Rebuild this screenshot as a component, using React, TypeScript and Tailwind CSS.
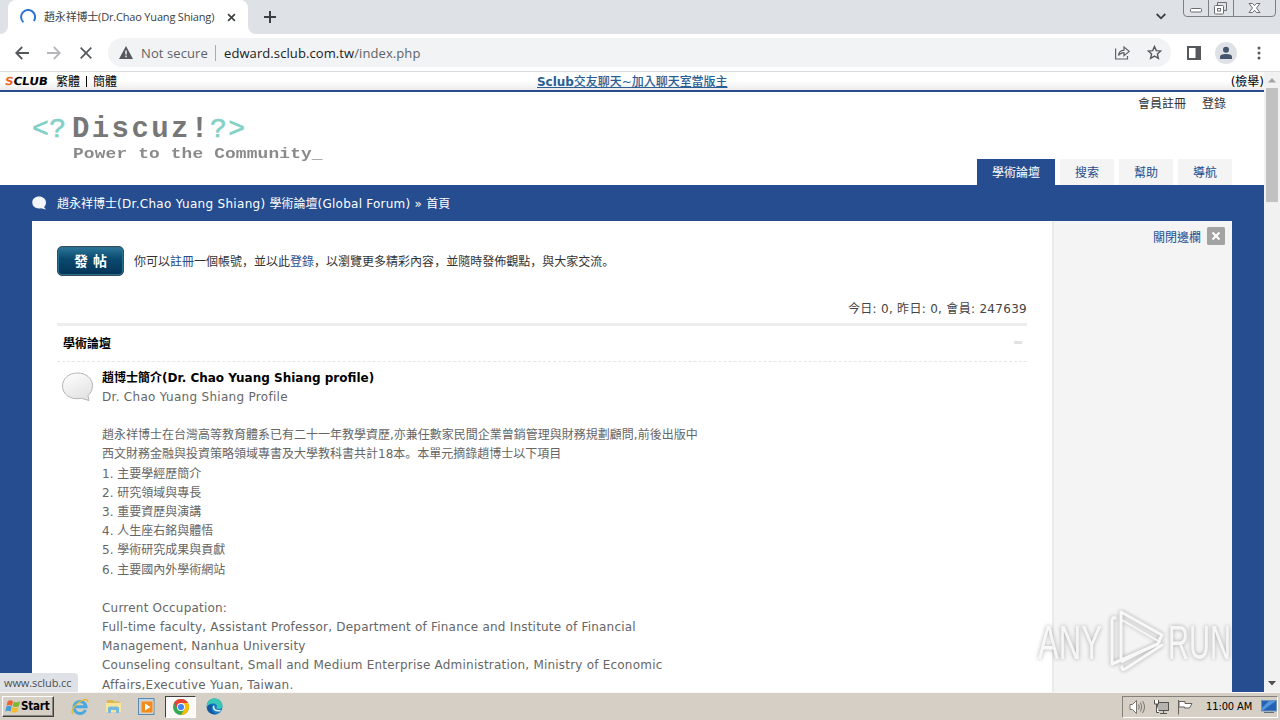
import React from "react";

type Line = { text: React.ReactNode; latin?: boolean };

function Punct({ children }: { children: string }) {
  return <span className="font-['Noto_Sans_CJK_SC'] leading-none">{children}</span>;
}

const intro: Line[] = [
  { text: "" },
  { text: "趙永祥博士在台灣高等教育體系已有二十一年教學資歷,亦兼任數家民間企業曾銷管理與財務規劃顧問,前後出版中" },
  { text: <>西文財務金融與投資策略領域專書及大學教科書共計18本<Punct>。</Punct>本單元摘錄趙博士以下項目</> },
  { text: "1. 主要學經歷簡介" },
  { text: "2. 研究領域與專長" },
  { text: "3. 重要資歷與演講" },
  { text: "4. 人生座右銘與體悟" },
  { text: "5. 學術研究成果與貢獻" },
  { text: "6. 主要國內外學術網站" },
  { text: "" },
  { text: "Current Occupation:", latin: true },
  { text: "Full-time faculty, Assistant Professor, Department of Finance and Institute of Financial", latin: true },
  { text: "Management, Nanhua University", latin: true },
  { text: "Counseling consultant, Small and Medium Enterprise Administration, Ministry of Economic", latin: true },
  { text: "Affairs,Executive Yuan, Taiwan.", latin: true },
];

function TabStrip() {
  return (
    <div className="flex h-[34px] shrink-0 bg-[#dee1e6]">
      <div className="flex w-2 items-end bg-white">
        <div className="h-full w-full rounded-br-lg bg-[#dee1e6]" />
      </div>
      <div className="flex w-[240px] items-center rounded-t-lg bg-white pl-3">
        <svg className="size-4 shrink-0" viewBox="0 0 16 16" fill="none" stroke="#2f73d0" strokeWidth="2">
          <path d="M3.4 13.2A7 7 0 1 1 13.8 12" />
        </svg>
        <div className="ml-2 w-[172px] whitespace-nowrap text-[11px] leading-4 tracking-[-0.18px] text-[#3c4043]">
          趙永祥博士(Dr.Chao Yuang Shiang)
        </div>
        <svg className="ml-[11px] size-[9px] shrink-0" viewBox="0 0 10 10" stroke="#3c4043" strokeWidth="1.8">
          <path d="M1.2 1.2 8.8 8.8M8.8 1.2 1.2 8.8" />
        </svg>
      </div>
      <div className="flex w-2 bg-white">
        <div className="h-full w-full rounded-bl-lg bg-[#dee1e6]" />
      </div>
      <div className="flex items-center pl-2">
        <svg className="size-3" viewBox="0 0 12 12" stroke="#3c4043" strokeWidth="2">
          <path d="M6 0V12M0 6H12" />
        </svg>
      </div>
      <div className="ml-auto flex">
        <svg className="mr-[17px] mt-[13px] h-[7px] w-[10px]" viewBox="0 0 10 7" fill="none" stroke="#3c4043" strokeWidth="1.8">
          <path d="M.7 1 5 5.3 9.3 1" />
        </svg>
        <svg className="mr-[4px] h-[17px] w-[93px]" viewBox="0 0 93 17" fill="none" stroke="#7c8088">
          <path d="M.5 0V13Q.5 16.5 4 16.5H89Q92.5 16.5 92.5 13V0M25.5 0V16M50.5 0V16" />
          <rect x="7.5" y="8.5" width="11" height="3.5" rx="1" fill="#fff" stroke="#6a6d75" />
          <path d="M34.5 5V2.5H43.5V10.5H41" stroke="#6a6d75" />
          <rect x="31.5" y="5.5" width="9" height="8.5" rx="1" fill="#fff" stroke="#6a6d75" />
          <rect x="34.5" y="8.5" width="3" height="2.5" stroke="#6a6d75" />
          <path d="M66 3.5H69.5L71.5 5.7 73.5 3.5H77L73.5 8 77 12.5H73.5L71.5 10.2 69.5 12.5H66L69.5 8Z" fill="#fff" stroke="#6a6d75" />
        </svg>
      </div>
    </div>
  );
}

function Toolbar() {
  return (
    <div className="flex h-[38px] shrink-0 items-center border-b border-[#d9dbde] bg-white pl-[15px] font-['Open_Sans']">
      <svg className="size-[14px]" viewBox="0 0 14 14" fill="none" stroke="#54585d" strokeWidth="1.8">
        <path d="M14 7H1.5M7.2 1 1.2 7 7.2 13" />
      </svg>
      <svg className="ml-[18px] size-[14px]" viewBox="0 0 14 14" fill="none" stroke="#b5b7ba" strokeWidth="1.8">
        <path d="M0 7H12.5M6.8 1 12.8 7 6.8 13" />
      </svg>
      <svg className="ml-[19px] size-3" viewBox="0 0 12 12" stroke="#54585d" strokeWidth="1.7">
        <path d="M.7.7 11.3 11.3M11.3.7.7 11.3" />
      </svg>
      <div className="ml-4 flex h-[29px] w-[1063px] items-center rounded-full bg-[#f1f3f4] pl-[11px] text-[13px] leading-5">
        <svg className="h-[13px] w-[14px]" viewBox="0 0 14 13">
          <path d="M7 0 14 13H0Z" fill="#55595e" />
          <path d="M7 4.5V8.5M7 9.5V11.2" stroke="#f1f3f4" strokeWidth="1.5" />
        </svg>
        <span className="ml-2 w-[68px] whitespace-nowrap tracking-[0.1px] text-[#5f6368]">Not secure</span>
        <div className="ml-[6px] h-4 w-px bg-[#a9acb0]" />
        <span className="ml-2 whitespace-nowrap tracking-[0.09px] text-[#202124]">
          edward.sclub.com.tw<span className="text-[#5f6368]">/index.php</span>
        </span>
        <svg className="ml-auto mr-[17px] h-[15px] w-[15px]" viewBox="0 0 15 15" fill="none" stroke="#5f6368" strokeWidth="1.2">
          <path d="M.6 3.5V14H12.5V11M3.5 10.5Q4 5.5 9 5.2V2L14.2 6.4 9 10.7V7.6Q5.5 7.6 3.5 10.5Z" />
        </svg>
        <svg className="mr-[9px] h-[15px] w-[15px]" viewBox="0 0 15 15" fill="none" stroke="#55595e" strokeWidth="1.4">
          <path d="M7.5 1.5 9.3 5.6 13.8 6 10.4 9 11.4 13.4 7.5 11.1 3.6 13.4 4.6 9 1.2 6 5.7 5.6Z" />
        </svg>
      </div>
      <svg className="ml-[16px] h-[14px] w-[14px]" viewBox="0 0 14 14">
        <path d="M1 1H13V13H1Z" fill="none" stroke="#55595e" strokeWidth="2" />
        <path d="M8.5 0H14V14H8.5Z" fill="#55595e" />
      </svg>
      <svg className="ml-[14px] size-[22px]" viewBox="0 0 22 22">
        <circle cx="11" cy="11" r="11" fill="#dee1e6" />
        <circle cx="11" cy="7.7" r="3" fill="#46546e" />
        <path d="M5 17V14.8Q5 12 11 12T17 14.8V17Z" fill="#46546e" />
      </svg>
      <svg className="ml-[20px] h-[14px] w-[4px]" viewBox="0 0 4 14" fill="#55595e">
        <circle cx="2" cy="2" r="1.5" />
        <circle cx="2" cy="7" r="1.5" />
        <circle cx="2" cy="12" r="1.5" />
      </svg>
    </div>
  );
}

function TopBar() {
  return (
    <div className="flex h-5 shrink-0 items-center border-b-2 border-[#2b4c8e] bg-gradient-to-b from-white from-50% to-[#ececec] pl-[5px] pt-px text-[12px] leading-[18px] text-black">
      <div className="flex w-[43px] origin-left skew-x-[-8deg] scale-x-[1.08] font-['DejaVu_Sans'] text-[11px] font-bold tracking-[-0.1px]">
        <span className="text-[#f0641e]">S</span>
        <span>CLUB</span>
      </div>
      <span className="ml-[8px] w-6 whitespace-nowrap pt-px">繁體</span>
      <div className="ml-[6px] mr-[6px] h-[11px] w-px bg-black" />
      <span className="w-6 whitespace-nowrap pt-px">簡體</span>
      <a className="ml-[420px] whitespace-nowrap pt-px font-bold tracking-[-0.03px] text-[#2a5f96] underline">
        Sclub<span className="font-medium">交友聊天~加入聊天室當版主</span>
      </a>
      <span className="ml-auto whitespace-nowrap pt-px">(檢舉)</span>
    </div>
  );
}

function Header() {
  return (
    <header className="flex h-[93px] shrink-0 justify-between bg-white px-8">
      <div className="flex flex-col whitespace-nowrap pt-[23px] font-['Liberation_Mono'] font-bold">
        <div className="flex h-[30px] items-center text-[29px] leading-[30px] text-[#777]">
          <span className="w-[40px] text-[28px] font-normal tracking-[0.5px] text-[#82d0c6] [-webkit-text-stroke:0.6px_#82d0c6]">&lt;?</span>
          <span className="w-[138px] tracking-[2.4px]">Discuz!</span>
          <span className="text-[28px] font-normal tracking-[1.5px] text-[#82d0c6] [-webkit-text-stroke:0.6px_#82d0c6]">?&gt;</span>
        </div>
        <div className="ml-[41px] origin-left scale-x-[1.15] text-[15.5px] leading-[18px] tracking-[0.14px] text-[#8a8a8a]">Power to the Community_</div>
      </div>
      <div className="flex flex-col items-end justify-between text-[12px]">
        <div className="flex gap-4 pr-[6px] pt-px leading-[22px] text-[#333]">
          <span>會員註冊</span>
          <span>登錄</span>
        </div>
        <nav className="flex h-[26px] gap-[5px] text-center leading-[29px] text-[#254d90]">
          <span className="h-[26px] w-[78px] bg-[#254d90] text-white">學術論壇</span>
          <span className="h-[26px] w-[54px] bg-[#f4f4f4]">搜索</span>
          <span className="h-[26px] w-[54px] bg-[#f4f4f4]">幫助</span>
          <span className="h-[26px] w-[54px] bg-[#f4f4f4]">導航</span>
        </nav>
      </div>
    </header>
  );
}

function Forum() {
  return (
    <main className="w-[1020px] shrink-0 overflow-hidden pl-[25px] pr-[25px] pt-[25px]">
      <div className="flex h-[30px] items-center">
        <button className="flex h-[30px] w-[67px] items-center justify-center rounded-[5px] border border-[#3a4a58] bg-gradient-to-b from-[#2d789b] via-[#0b4b70] via-40% to-[#053356] pb-px text-[14px] font-bold leading-7 text-white shadow-[inset_0_0_0_1px_#28708f]">
          發<span className="w-[5px]" />帖
        </button>
        <p className="ml-[10px] whitespace-nowrap pt-[2px] text-[12px] leading-5 text-[#333]">
          你可以<span className="text-[#254d90]">註冊</span>一個帳號<Punct>，</Punct>並以此<span className="text-[#254d90]">登錄</span>
          <Punct>，</Punct>以瀏覽更多精彩內容<Punct>，</Punct>並隨時發佈觀點<Punct>，</Punct>與大家交流<Punct>。</Punct>
        </p>
      </div>
      <p className="mt-[24px] text-right text-[12px] leading-[19px] tracking-[0.3px] text-[#444]">今日: 0, 昨日: 0, 會員: 247639</p>
      <div className="mt-[4px] flex h-[39px] items-center justify-between border-b border-t-[3px] border-dashed border-b-[#e6e6e6] border-t-[#ededed] pl-[6px] pr-[5px] [border-top-style:solid]">
        <h2 className="text-[12px] font-bold leading-5 text-black">學術論壇</h2>
        <div className="mb-[2px] h-[3px] w-2 bg-[#e2e2e2]" />
      </div>
      <section className="flex pt-[6.6px]">
        <svg className="ml-1 mt-[3px] h-[30px] w-[34px] shrink-0" viewBox="0 0 34 30">
          <defs>
            <linearGradient id="bubble" x1="0" y1="0" x2="0.5" y2="1">
              <stop stopColor="#fff" />
              <stop offset="1" stopColor="#e4e4e4" />
            </linearGradient>
          </defs>
          <path d="M16.5 1C25 1 31.5 6.5 31.5 13.5 31.5 18 29.5 21.5 27 23.5L28 28.5 20.5 26.3C9 28.5 1.5 22 1.5 14 1.5 6.5 8 1 16.5 1Z" fill="url(#bubble)" stroke="#b5b5b5" />
        </svg>
        <div className="ml-[7px] whitespace-nowrap text-[12px] leading-[19.2px] text-[#666]">
          <h3 className="font-bold text-black">趙博士簡介(Dr. Chao Yuang Shiang profile)</h3>
          <p className="tracking-[0.29px]">Dr. Chao Yuang Shiang Profile</p>
          {intro.map((line, i) => (
            <p key={i} className={line.latin ? "h-[19.2px] tracking-[0.21px]" : "h-[19.2px]"}>
              {line.text}
            </p>
          ))}
        </div>
      </section>
    </main>
  );
}

function ForumPage() {
  return (
    <div className="flex w-[1264px] flex-col overflow-hidden bg-[#254d90]">
      <TopBar />
      <Header />
      <div className="flex h-9 shrink-0 items-center px-8 text-[12px] text-white">
        <svg className="h-[14px] w-[15px]" viewBox="0 0 15 14">
          <path d="M7 .5C11 .5 14 3 14 6.5 14 8.5 13 10 12 11L14 13.5 9 12.3C4 13.2.3 10.5.3 6.5.3 3 3 .5 7 .5Z" fill="#f3f6fb" />
        </svg>
        <span className="ml-[10px] whitespace-nowrap pt-[2px]">
          趙永祥博士<span className="tracking-[0.3px]">(Dr.Chao Yuang Shiang) </span>學術論壇<span className="tracking-[0.24px]">(Global Forum) » </span>首頁
        </span>
      </div>
      <div className="mx-8 flex min-h-0 flex-1 bg-white">
        <Forum />
        <aside className="flex flex-1 items-start justify-end border-l-2 border-[#eaeaea] bg-[#f4f4f4] pr-[7px] pt-[6px] text-[12px] leading-5 text-[#254d90]">
          <span className="mr-[6px] pt-px">關閉邊欄</span>
          <svg className="size-[18px]" viewBox="0 0 18 18">
            <rect width="18" height="18" rx="1.5" fill="#a3a3a3" />
            <path d="M5.5 5.5 12.5 12.5M12.5 5.5 5.5 12.5" stroke="#fff" strokeWidth="2" />
          </svg>
        </aside>
      </div>
    </div>
  );
}

function ScrollBar() {
  return (
    <div className="flex w-4 flex-col items-center bg-[#f1f1f1]">
      <svg className="h-4 w-4 shrink-0" viewBox="0 0 16 16"><path d="M4 10.5 8 6 12 10.5Z" fill="#a3a3a3" /></svg>
      <div className="h-[114px] w-3 bg-[#c1c1c1]" />
      <svg className="mt-auto h-[17px] w-4 shrink-0" viewBox="0 0 16 17"><path d="M4 6 8 10.5 12 6Z" fill="#505050" /></svg>
    </div>
  );
}

function TaskBar() {
  return (
    <div className="flex h-7 shrink-0 items-center border-t border-[#f8f7f5] bg-[#d5cfc6] pl-[2px] font-['DejaVu_Sans']">
      <button className="flex h-[21px] w-[52px] items-center border border-b-[#404040] border-l-white border-r-[#404040] border-t-white pl-[2px] text-[11px] font-bold tracking-[-0.4px] text-black shadow-[inset_-1px_-1px_#8a867f]">
        <svg className="h-[15px] w-[16px] shrink-0" viewBox="0 0 15 14">
          <path d="M2.5 2Q5 .5 7.5 2L6.5 6.5Q4 5 1.5 6.3Z" fill="#ee6233" />
          <path d="M8.2 2.2Q11 4 14.2 2L13 6.8Q10 8.2 7.2 6.8Z" fill="#7eb735" />
          <path d="M1.3 7Q3.8 5.7 6.3 7.2L5.2 11.8Q3 10.5.2 11.6Z" fill="#459dd8" />
          <path d="M7 7.5Q10 9 12.8 7.5L11.7 12Q8.8 13.8 5.9 12.2Z" fill="#f5bc2f" />
        </svg>
        <span className="pt-px font-['DejaVu_Sans_Condensed','DejaVu_Sans'] text-[11.5px] tracking-[-0.2px]">Start</span>
      </button>
      <svg className="ml-[17px] size-[18px]" viewBox="0 0 18 18" fill="none">
        <path d="M14.5 12A6 6 0 1 1 15 8.8H4.5" stroke="#49a9df" strokeWidth="3" />
        <path d="M2.5 15.5C-1 16 2 9 7 5S17.5 0 16.5 4" stroke="#e4b93b" strokeWidth="1.5" />
      </svg>
      <svg className="ml-[16px] size-[17px]" viewBox="0 0 17 17">
        <path d="M2 2H8L9 3.5H14.5V10H2Z" fill="#dfb74d" />
        <path d="M1 5H16V14H1Z" fill="#f8e59a" />
        <path d="M3 15V10Q3 8.5 5 8.5H12Q14 8.5 14 10V15H11V12H6V15Z" fill="#75b8df" />
      </svg>
      <svg className="ml-[16px] size-[17px]" viewBox="0 0 17 17">
        <rect x=".5" y=".5" width="15.5" height="16" fill="#bad5ea" stroke="#5c8aae" />
        <rect x="3" y="3" width="12" height="12" rx="1" fill="#ef8c20" stroke="#e8d3b2" />
        <path d="M7 5.5 12.5 9 7 12.5Z" fill="#fff" />
      </svg>
      <div className="ml-[10px] flex h-[22px] w-[31px] items-center justify-center border border-b-white border-l-[#404040] border-r-white border-t-[#404040] bg-[#faf9f7]">
        <svg className="size-4" viewBox="0 0 16 16">
          <circle cx="8" cy="8" r="8" fill="#34a853" />
          <path d="M1.07 4A8 8 0 0 1 14.93 4H8L4.54 10Z" fill="#ea4335" />
          <path d="M14.93 4A8 8 0 0 1 8 16L11.46 10 8 4Z" fill="#fbbc05" />
          <circle cx="8" cy="8" r="4" fill="#fff" />
          <circle cx="8" cy="8" r="3.1" fill="#4285f4" />
        </svg>
      </div>
      <svg className="ml-[10px] size-[17px]" viewBox="0 0 17 17">
        <circle cx="8.5" cy="8.5" r="8" fill="#167cc4" />
        <path d="M1 6.5C2 2 5 .5 8.5.5 13.5.5 16.5 4 16.5 7.5 16.5 11 12.5 11.5 10.5 10.5 12 7.5 10 5.5 7 5.5 4 5.5 2 7 1 9Z" fill="#39c6b4" />
        <path d="M7 7C4 10 6 15.5 11 16 7 17 2 15 1 10 2 6.5 5 6 7 7Z" fill="#15569f" />
        <path d="M8 8C6.5 10.5 9 13.5 14.5 12.5" stroke="#d9eff9" strokeWidth="1.6" fill="none" />
      </svg>
      <div className="ml-auto mr-[2px] flex h-[22px] w-[156px] items-center border border-b-white border-l-[#85817a] border-r-white border-t-[#85817a] pl-[6px]">
        <svg className="h-4 w-[17px]" viewBox="0 0 17 16" fill="none" stroke="#77736d">
          <path d="M1 5.5H3.5L7.5 1.5V14.5L3.5 10.5H1Z" fill="#fff" />
          <path d="M9.5 5.5Q11 8 9.5 10.5M11.5 3.5Q14 8 11.5 12.5M13.5 2Q17.5 8 13.5 14" />
        </svg>
        <svg className="ml-[7px] h-4 w-4" viewBox="0 0 16 16" stroke="#55534f">
          <rect x="4.5" y="3.5" width="11" height="8" fill="#b5b3af" />
          <path d="M7 14.5H14M10.5 12V14.5" />
          <path d="M1.5 1V5H5.5V1M3.5 5V13.5H6" fill="#fff" />
        </svg>
        <svg className="ml-[8px] h-4 w-4" viewBox="0 0 16 16" fill="#fff" stroke="#66635f">
          <path d="M1.5 1V15.5M2 2.5H8V4.5H15L12.5 9H7.5V8H2Z" />
        </svg>
        <span className="ml-[13px] w-[48px] whitespace-nowrap pt-px font-['DejaVu_Sans_Condensed','DejaVu_Sans'] text-[11px] leading-4 tracking-[-0.1px] text-black">11:00 AM</span>
        <svg className="ml-[7px] h-[14px] w-4 shrink-0" viewBox="0 0 16 14">
          <rect x=".5" y=".5" width="15" height="10.5" fill="#2462b4" stroke="#7094bd" />
          <path d="M1 11 15 1H8L1 8Z" fill="#5795db" />
          <path d="M3 12.5H13" stroke="#606f7e" />
        </svg>
      </div>
    </div>
  );
}

function Watermark() {
  return (
    <div className="absolute left-[1036px] top-[606px] opacity-80">
      <svg width="204" height="70" viewBox="0 0 204 70" className="overflow-visible drop-shadow-[0_0_2px_rgba(0,0,0,0.4)]">
        <g fill="none" stroke="#f9f9f9" strokeWidth="3" strokeLinejoin="round" strokeLinecap="round">
          <path d="M79 12Q76 11 76 15V58L122 38" />
          <path d="M85 52V6L126 29 123 35" />
          <path d="M86 14 124 36 86 56" strokeWidth="2" />
          <path d="M126 39 89 63Q86 65 86 61" />
        </g>
        <g fill="#f7f7f7" fontFamily="'Liberation Sans Narrow','Liberation Sans',sans-serif" fontSize="48">
          <text x="2" y="53" textLength="64" lengthAdjust="spacingAndGlyphs">ANY</text>
          <text x="132" y="53" textLength="63" lengthAdjust="spacingAndGlyphs">RUN</text>
        </g>
      </svg>
    </div>
  );
}

export default function App() {
  return (
    <div className="relative flex h-[720px] w-[1280px] flex-col overflow-hidden bg-white font-['DejaVu_Sans','Noto_Sans_CJK_TC',sans-serif]">
      <div className="flex shrink-0 flex-col font-['Open_Sans','Noto_Sans_CJK_TC',sans-serif]">
        <TabStrip />
        <Toolbar />
      </div>
      <div className="flex min-h-0 flex-1">
        <ForumPage />
        <ScrollBar />
      </div>
      <TaskBar />
      <div className="absolute left-0 top-[673px] h-[19px] w-[78px] rounded-tr bg-[#dee1e6] pl-1 font-['Open_Sans'] text-[11px] leading-[20px] tracking-[-0.1px] text-[#4b4f54]">
        www.sclub.cc
      </div>
      <Watermark />
    </div>
  );
}
